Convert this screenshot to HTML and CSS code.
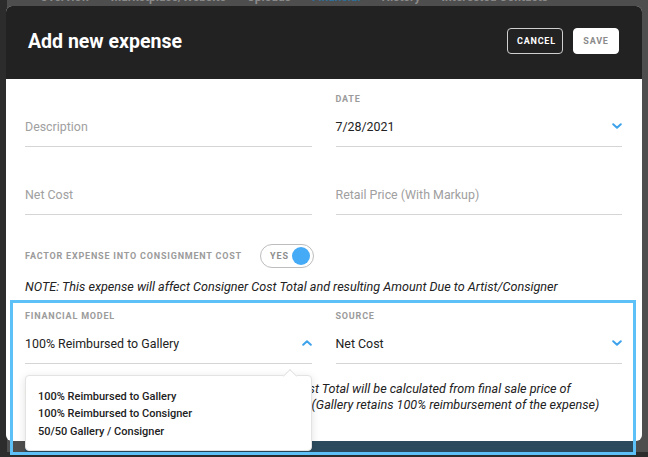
FILE: index.html
```html
<!DOCTYPE html>
<html lang="en">
<head>
    <meta charset="UTF-8">
    <meta name="viewport" content="width=device-width, initial-scale=1.0">
    <title>Add new expense</title>
    <link rel="stylesheet" href="styles.css">
</head>
<body>
    <div class="page">
        <nav class="tabs">
            <span>Overview</span>
            <span>Marketplace/Website</span>
            <span>Uploads</span>
            <span class="active">Financial</span>
            <span>History</span>
            <span>Interested Contacts</span>
        </nav>
        <div class="page-bar"></div>
    </div>

    <div class="modal">
        <header class="modal-header">
            <h1>Add new expense</h1>
            <div class="modal-actions">
                <button class="btn btn-outline">Cancel</button>
                <button class="btn btn-solid">Save</button>
            </div>
        </header>

        <div class="modal-body">
            <div class="form-row">
                <div class="field">
                    <label class="field-label"></label>
                    <div class="field-input placeholder">Description</div>
                </div>
                <div class="field">
                    <label class="field-label">Date</label>
                    <div class="field-input">
                        <span>7/28/2021</span>
                        <svg class="chevron" width="10" height="6" viewBox="0 0 10 6"><path d="M1.2 1.2 5 4.8 8.8 1.2"/></svg>
                    </div>
                </div>
            </div>

            <div class="form-row">
                <div class="field">
                    <label class="field-label"></label>
                    <div class="field-input placeholder">Net Cost</div>
                </div>
                <div class="field">
                    <label class="field-label"></label>
                    <div class="field-input placeholder">Retail Price (With Markup)</div>
                </div>
            </div>

            <div class="toggle-row">
                <span class="field-label">Factor expense into consignment cost</span>
                <div class="toggle">
                    <span class="toggle-text">Yes</span>
                    <span class="toggle-knob"></span>
                </div>
            </div>

            <p class="note">NOTE: This expense will affect Consigner Cost Total and resulting Amount Due to Artist/Consigner</p>

            <div class="form-row model-row">
                <div class="field field-open">
                    <label class="field-label">Financial Model</label>
                    <div class="field-input">
                        <span>100% Reimbursed to Gallery</span>
                        <svg class="chevron" width="10" height="6" viewBox="0 0 10 6"><path d="M1.2 4.8 5 1.2 8.8 4.8"/></svg>
                    </div>
                    <ul class="dropdown">
                        <li>100% Reimbursed to Gallery</li>
                        <li>100% Reimbursed to Consigner</li>
                        <li>50/50 Gallery / Consigner</li>
                    </ul>
                </div>
                <div class="field">
                    <label class="field-label">Source</label>
                    <div class="field-input">
                        <span>Net Cost</span>
                        <svg class="chevron" width="10" height="6" viewBox="0 0 10 6"><path d="M1.2 1.2 5 4.8 8.8 1.2"/></svg>
                    </div>
                </div>
            </div>

            <p class="note note-model">NOTE: This expense will not be added. Consigner Cost Total will be calculated from final sale price of<br>the artwork minus the gallery commission plus fees. (Gallery retains 100% reimbursement of the expense)</p>
        </div>
    </div>

    <div class="highlight"></div>
</body>
</html>
```

FILE: styles.css
```css
* {
    margin: 0;
    padding: 0;
    box-sizing: border-box;
}

body {
    font-family: Roboto, "Noto Sans", sans-serif;
    background: #2c2c2c;
    height: 457px;
    overflow: hidden;
}

/* page behind the modal */
.page {
    margin-left: 7px;
    height: 452px;
    background: #4e4e4e;
    display: flex;
    flex-direction: column;
    justify-content: space-between;
    overflow: hidden;
}

.tabs {
    display: flex;
    gap: 21px;
    margin-top: -11px;
    padding-left: 33px;
    font-size: 12px;
    font-weight: 700;
    line-height: 16px;
    color: #8c8c8c;
}

.tabs .active {
    color: #2d6f98;
}

.page-bar {
    height: 11px;
    margin: 0 14px 0 18px;
    background: #2b4a5d;
}

/* modal */
.modal {
    position: absolute;
    left: 6px;
    top: 6px;
    width: 636px;
    height: 435px;
    background: white;
    border-radius: 6px;
    z-index: 2;
}

.modal-header {
    height: 73px;
    background: #222;
    border-radius: 6px 6px 0 0;
    display: flex;
    align-items: center;
    justify-content: space-between;
    padding: 0 23px 3px 22px;
}

.modal-header h1 {
    font-size: 19.5px;
    font-weight: 700;
    color: white;
}

.modal-actions {
    display: flex;
    gap: 10px;
}

.btn {
    height: 26px;
    padding: 0 9px;
    border-radius: 4px;
    font-family: Roboto, sans-serif;
    font-size: 9px;
    font-weight: 700;
    letter-spacing: 0.8px;
    text-transform: uppercase;
    cursor: pointer;
}

.btn-outline {
    background: none;
    border: 1px solid #cfcfcf;
    color: white;
    width: 56px;
}

.btn-solid {
    background: white;
    border: 1px solid white;
    color: #8a8a8a;
    width: 46px;
}

.modal-body {
    padding: 13px 20px 0 19px;
}

.form-row {
    display: grid;
    grid-template-columns: 1fr 1fr;
    column-gap: 24px;
}

.form-row + .form-row {
    margin-top: 13px;
}

.field {
    position: relative;
}

.field-label {
    display: block;
    height: 14px;
    line-height: 14px;
    font-size: 9px;
    font-weight: 700;
    letter-spacing: 0.8px;
    color: #9b9b9b;
    text-transform: uppercase;
}

.field-input {
    height: 41px;
    display: flex;
    align-items: center;
    justify-content: space-between;
    border-bottom: 1px solid #d5d5d5;
    font-size: 12.4px;
    color: #222;
}

.placeholder {
    color: #a0a0a0;
}

.chevron path {
    fill: none;
    stroke: #3fa3ec;
    stroke-width: 2;
    stroke-linecap: round;
    stroke-linejoin: round;
}

.toggle-row {
    display: flex;
    align-items: center;
    gap: 18px;
    margin-top: 29px;
}

.toggle {
    width: 54px;
    height: 24px;
    border: 1px solid #bdbdbd;
    border-radius: 12px;
    display: flex;
    align-items: center;
    justify-content: space-between;
    padding: 0 3px 0 9px;
}

.toggle-text {
    font-size: 9px;
    font-weight: 700;
    letter-spacing: 1px;
    color: #8d8d8d;
    text-transform: uppercase;
}

.toggle-knob {
    width: 18px;
    height: 18px;
    border-radius: 50%;
    background: #46abf6;
}

.note {
    margin-top: 10px;
    font-size: 12.6px;
    font-style: italic;
    line-height: 18px;
    color: #222;
}

.model-row {
    margin-top: 13px;
}

.note-model {
    margin-top: 17px;
    line-height: 16px;
    white-space: nowrap;
}

/* open select menu */
.dropdown {
    position: absolute;
    top: calc(100% + 11px);
    left: 0;
    right: 0;
    height: 76px;
    list-style: none;
    padding: 12px 12px 0;
    background: white;
    border: 1px solid #e3e3e3;
    border-radius: 4px;
    box-shadow: 0 2px 8px rgba(0,0,0,0.12);
    z-index: 4;
}

.dropdown::before {
    content: "";
    position: absolute;
    top: -5px;
    right: 16px;
    width: 9px;
    height: 9px;
    background: white;
    border-top: 1px solid #e3e3e3;
    border-left: 1px solid #e3e3e3;
    transform: rotate(45deg);
}

.dropdown li {
    font-size: 11px;
    font-weight: 500;
    line-height: 17.3px;
    color: #222;
}

/* annotation frame */
.highlight {
    position: absolute;
    left: 10px;
    top: 300px;
    width: 626px;
    height: 155px;
    border: 3px solid #5dc0f6;
    pointer-events: none;
    z-index: 3;
}
```
